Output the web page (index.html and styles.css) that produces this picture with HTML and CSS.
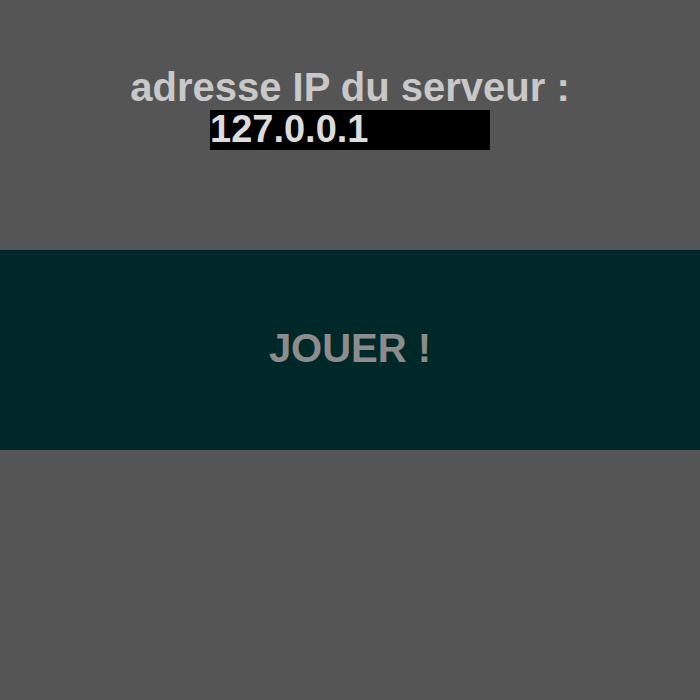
FILE: index.html
```html
<!DOCTYPE html>
<html lang="fr">
<head>
<meta charset="utf-8">
<title>Connexion</title>
<link rel="stylesheet" href="styles.css">
</head>
<body>
<div class="page">
  <div class="form">
    <label class="label" for="ip">adresse IP du serveur :</label>
    <input class="ip" id="ip" type="text" value="127.0.0.1">
  </div>
  <button class="play">JOUER !</button>
</div>
</body>
</html>
```
FILE: styles.css
```css
html, body {
  margin: 0;
  padding: 0;
  background: #555555;
  font-family: "Liberation Sans", Arial, sans-serif;
  font-weight: bold;
}
.page {
  width: 700px;
  height: 700px;
  display: flex;
  flex-direction: column;
}
.form {
  height: 250px;
  display: flex;
  flex-direction: column;
  align-items: center;
  padding-top: 67px;
  box-sizing: border-box;
}
.label {
  color: #c8c8c8;
  font-size: 40px;
  line-height: 40px;
  margin-bottom: 3px;
  display: block;
}
.ip {
  width: 280px;
  height: 40px;
  box-sizing: border-box;
  margin: 0;
  border: none;
  padding: 0 0 2px 0;
  background: #000000;
  color: #dcdcdc;
  font-family: "Liberation Sans", Arial, sans-serif;
  font-weight: bold;
  font-size: 38px;
  outline: none;
}
.play {
  width: 700px;
  height: 200px;
  margin: 0;
  border: none;
  background: #002828;
  color: #8c8c8c;
  font-family: "Liberation Sans", Arial, sans-serif;
  font-weight: bold;
  font-size: 40px;
  padding: 0 0 3px 0;
}
```
